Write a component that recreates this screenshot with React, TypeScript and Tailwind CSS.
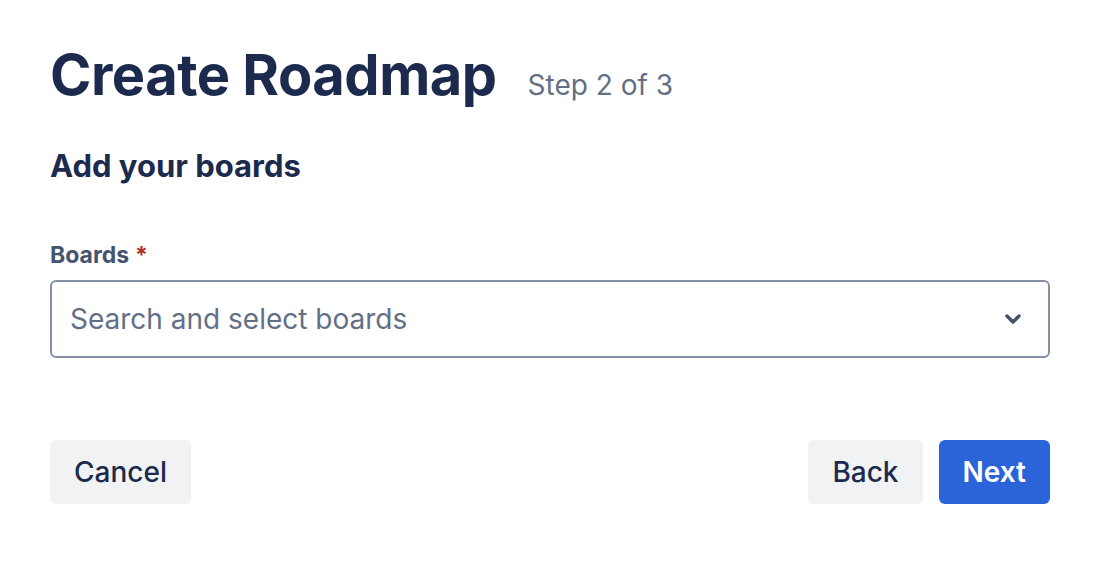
import React from 'react';

const font = { fontFamily: 'Inter, "Noto Sans", sans-serif' };

export default function App() {
    return (
        <div className="w-[1106px] h-[562px] bg-white" style={font}>
            <div className="w-[1000px] ml-[50px] pt-[42px]">
                {/* Header */}
                <div className="flex items-baseline gap-[31px]">
                    <h1 className="text-[56px] leading-[66px] font-bold tracking-[-0.5px] text-[#1c2b4d]">Create Roadmap</h1>
                    <span className="text-[28px] text-[#626f86]">Step 2 of 3</span>
                </div>

                <h2 className="mt-[38px] text-[31px] leading-[40px] font-bold text-[#1c2b4d]">Add your boards</h2>

                {/* Boards field */}
                <div className="mt-[54px]">
                    <label className="flex items-center gap-[6px] text-[23px] leading-[30px] font-bold text-[#44546f]">
                        Boards
                        <span className="text-[#ae2e24]">*</span>
                    </label>
                    <div className="mt-[10px] h-[78px] flex items-center justify-between pl-[18px] pr-[26px] border-2 border-[#8590a2] rounded-[6px]">
                        <span className="text-[28px] text-[#626f86]">Search and select boards</span>
                        <svg width="18" height="12" viewBox="0 0 18 12" fill="none">
                            <path d="M3 3l6 6 6-6" stroke="#44546f" strokeWidth="3.5" strokeLinecap="round" strokeLinejoin="round" />
                        </svg>
                    </div>
                </div>

                {/* Actions */}
                <div className="mt-[82px] flex items-center justify-between">
                    <button className="h-[64px] px-[24px] rounded-[6px] bg-[#f1f2f4] text-[28px] font-medium text-[#1c2b4d]">Cancel</button>
                    <div className="flex items-center gap-[16px]">
                        <button className="h-[64px] px-[24px] rounded-[6px] bg-[#f1f2f4] text-[28px] font-medium text-[#1c2b4d]">Back</button>
                        <button className="h-[64px] px-[24px] rounded-[6px] bg-[#2b63d9] text-[28px] font-semibold text-white">Next</button>
                    </div>
                </div>
            </div>
        </div>
    );
}
